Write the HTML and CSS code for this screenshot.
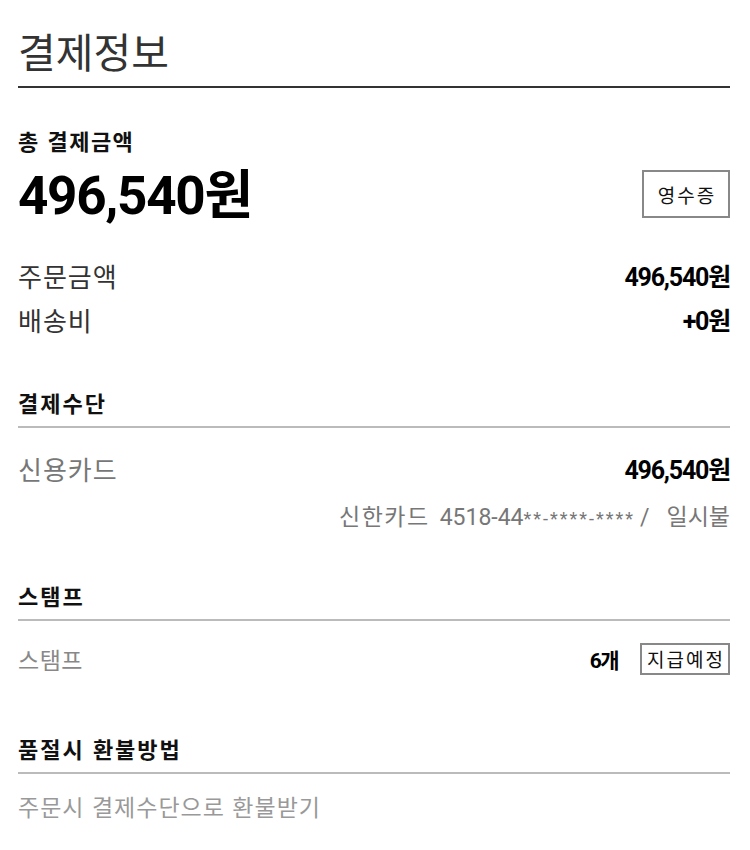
FILE: index.html
```html
<!DOCTYPE html>
<html lang="ko">
<head>
<meta charset="utf-8">
<link rel="stylesheet" href="styles.css">
</head>
<body>
<div class="page">
  <h1 class="title">결제정보</h1>

  <section class="total">
    <div class="total-label">총 결제금액</div>
    <div class="total-row">
      <div class="total-amount">496,540원</div>
      <button class="receipt">영수증</button>
    </div>
  </section>

  <section class="summary">
    <div class="row"><span class="label">주문금액</span><span class="value">496,540원</span></div>
    <div class="row"><span class="label">배송비</span><span class="value">+0원</span></div>
  </section>

  <section class="block block-pay">
    <h2 class="block-title">결제수단</h2>
    <div class="row pay"><span class="label gray">신용카드</span><span class="value">496,540원</span></div>
    <div class="card-info"><span class="card-name">신한카드</span><span class="card-no">4518-44<span class="stars">**-****-****</span></span><span class="slash">/</span><span class="card-plan">일시불</span></div>
  </section>

  <section class="block block-stamp">
    <h2 class="block-title">스탬프</h2>
    <div class="row stamp"><span class="label gray small">스탬프</span><span class="stamp-right"><span class="value count">6개</span><span class="tag">지급예정</span></span></div>
  </section>

  <section class="block block-refund">
    <h2 class="block-title">품절시 환불방법</h2>
    <div class="refund">주문시 결제수단으로 환불받기</div>
  </section>
</div>
</body>
</html>
```

FILE: styles.css
```css
* { box-sizing: border-box; }
body {
  margin: 0;
  background: #fff;
  font-family: "Roboto", "Noto Sans CJK KR", sans-serif;
  color: #111;
}
.page {
  padding: 22px 20px 0 18px;
}
.title {
  margin: 0;
  font-family: "Noto Sans CJK KR", sans-serif;
  font-weight: 400;
  font-size: 41px;
  line-height: 56px;
  color: #333;
  padding-bottom: 8px;
  border-bottom: 2px solid #333;
}
.total { margin-top: 40px; }
.total-label {
  font-family: "Noto Sans CJK KR", sans-serif;
  font-weight: 700;
  font-size: 22px;
  line-height: 24px;
  letter-spacing: 1.5px;
}
.total-row {
  display: flex;
  justify-content: space-between;
  align-items: center;
  margin-top: 14px;
}
.total-amount {
  font-weight: 700;
  font-size: 53px;
  line-height: 60px;
  letter-spacing: -1.3px;
  color: #000;
}
.receipt {
  font-family: "Noto Sans CJK KR", sans-serif;
  font-size: 19px;
  letter-spacing: 2px;
  background: #fff;
  border: 2px solid #888;
  width: 88px;
  height: 48px;
  margin: 0 0 4px 0;
  padding: 0 0 0 2px;
  color: #111;
}
.summary { margin-top: 27px; }
.row {
  display: flex;
  justify-content: space-between;
  align-items: center;
  height: 44px;
}
.label {
  font-family: "Noto Sans CJK KR", sans-serif;
  font-size: 26px;
  letter-spacing: 1px;
  color: #333;
}
.label.gray { color: #777; }
.label.small { font-size: 23px; letter-spacing: 0.5px; color: #888; }
.value {
  font-weight: 700;
  font-size: 25px;
  letter-spacing: -1.2px;
  color: #000;
}
.block { margin-top: 40px; }
.block-title {
  margin: 0;
  font-family: "Noto Sans CJK KR", sans-serif;
  font-weight: 700;
  font-size: 22px;
  line-height: 28px;
  letter-spacing: 2px;
  padding-bottom: 10px;
  border-bottom: 2px solid #bbb;
  color: #111;
}
.block-pay { margin-top: 47px; }
.pay { margin-top: 18px; }
.card-info {
  display: flex;
  justify-content: flex-end;
  align-items: baseline;
  font-size: 23px;
  line-height: 28px;
  color: #777;
  margin-top: 11px;
}
.card-name {
  font-family: "Noto Sans CJK KR", sans-serif;
  letter-spacing: 1.5px;
  margin-right: 10px;
}
.stars {
  font-size: 18px;
  letter-spacing: 2px;
}
.slash { margin: 0 17px 0 5px; }
.card-plan { font-family: "Noto Sans CJK KR", sans-serif; }
.block-stamp { margin-top: 48px; }
.stamp { margin-top: 16px; }
.stamp-right {
  display: flex;
  align-items: center;
  gap: 22px;
}
.count { font-size: 21px; letter-spacing: -1.5px; }
.tag {
  font-family: "Noto Sans CJK KR", sans-serif;
  font-size: 19px;
  line-height: 28px;
  letter-spacing: 2px;
  border: 2px solid #888;
  padding: 0 3px 0 5px;
  color: #111;
}
.block-refund { margin-top: 53px; }
.refund {
  margin-top: 15px;
  font-family: "Noto Sans CJK KR", sans-serif;
  font-size: 23px;
  letter-spacing: 1px;
  color: #999;
}
```
